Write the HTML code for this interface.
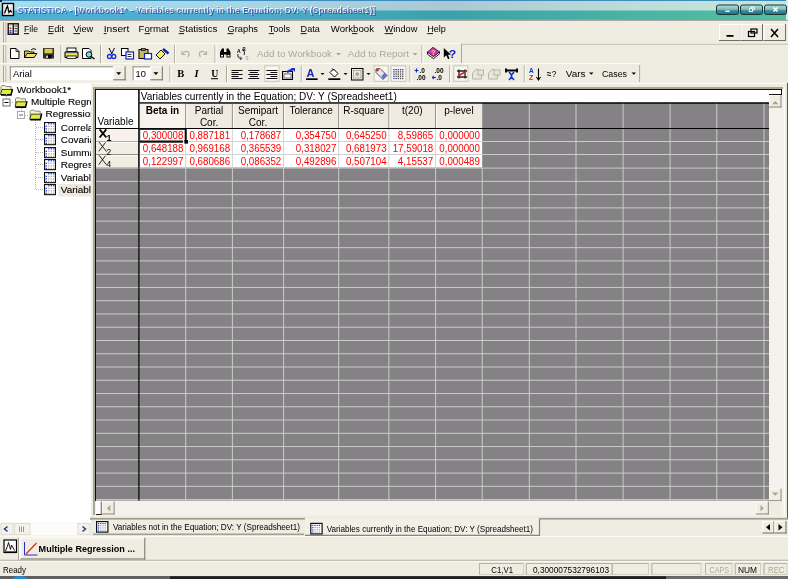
<!DOCTYPE html>
<html><head><meta charset="utf-8"><style>html,body{margin:0;padding:0;width:788px;height:579px;overflow:hidden;background:#efece2}</style></head>
<body><svg width="788" height="579" viewBox="0 0 788 579" font-family="'Liberation Sans', sans-serif" style="position:absolute;left:0;top:0;will-change:transform"><defs>
<linearGradient id="tbTop" x1="0" x2="1" y1="0" y2="0">
 <stop offset="0" stop-color="#a4dcee"/><stop offset="0.3" stop-color="#a6d6e6"/><stop offset="0.57" stop-color="#aac8d4"/><stop offset="0.8" stop-color="#bcdcd8"/><stop offset="1" stop-color="#c8e6d8"/>
</linearGradient>
<linearGradient id="tbBot" x1="0" x2="1" y1="0" y2="0">
 <stop offset="0" stop-color="#4ab2d6"/><stop offset="0.3" stop-color="#4eaccf"/><stop offset="0.57" stop-color="#3aa2aa"/><stop offset="0.8" stop-color="#48b4a4"/><stop offset="1" stop-color="#52c0a0"/>
</linearGradient>
<linearGradient id="tbBtn" x1="0" x2="0" y1="0" y2="1">
 <stop offset="0" stop-color="#b4dcdc"/><stop offset="0.45" stop-color="#80bcc0"/><stop offset="0.6" stop-color="#3a9098"/><stop offset="1" stop-color="#1a7078"/>
</linearGradient>
<clipPath id="treeclip"><rect x="0" y="84" width="91" height="438"/></clipPath>
<pattern id="dots" width="2" height="2" patternUnits="userSpaceOnUse"><rect width="1" height="1" fill="#a0a0a0"/></pattern>
</defs><rect x="0" y="0" width="788" height="579" fill="#efece2" /><rect x="0" y="0" width="788" height="20" fill="url(#tbBot)" /><rect x="0" y="1" width="788" height="9.5" fill="url(#tbTop)" /><rect x="0" y="0" width="788" height="1" fill="#3c8cbc" /><rect x="0" y="19" width="788" height="1" fill="#4ab0d8" /><rect x="786" y="0" width="2" height="20" fill="#d8ecf0" /><rect x="0" y="20" width="788" height="0.8" fill="#9a9890" /><rect x="0" y="0" width="2" height="2" fill="#202020" /><rect x="2.5" y="3.5" width="11" height="12" fill="#fff" stroke="#000" stroke-width="1.4"/><path d="M5 5 V14 M8 5 V14 M11 5 V14 M3.5 8 H13 M3.5 11 H13" stroke="#c8c8c8" stroke-width="0.6"/><path d="M4.5 13.5 L6.5 8 L7.5 6 L9 12.5 L10.5 10.5 L12 12.5" fill="none" stroke="#000" stroke-width="1.2"/><text x="17.3" y="13.3" font-size="8.2" font-weight="bold" fill="#ffffff" textLength="358" lengthAdjust="spacing">STATISTICA - [Workbook1* - Variables currently in the Equation; DV: Y (Spreadsheet1)]</text><text x="18.1" y="14.1" font-size="8.2" font-weight="bold" fill="#1a2896" fill-opacity="0.62" textLength="358" lengthAdjust="spacing">STATISTICA - [Workbook1* - Variables currently in the Equation; DV: Y (Spreadsheet1)]</text><rect x="716.5" y="5" width="22" height="9.5" rx="2" fill="url(#tbBtn)" stroke="#1c3438" stroke-width="1"/><rect x="725.5" y="10.5" width="4" height="1.5" fill="#fff" /><rect x="740.5" y="5" width="22" height="9.5" rx="2" fill="url(#tbBtn)" stroke="#1c3438" stroke-width="1"/><rect x="751.0" y="7" width="3.2" height="2.8" fill="none" stroke="#fff" stroke-width="0.9"/><rect x="749.3" y="8.8" width="3.2" height="2.8" fill="#3a9098" stroke="#fff" stroke-width="0.9"/><rect x="764.5" y="5" width="22" height="9.5" rx="2" fill="url(#tbBtn)" stroke="#1c3438" stroke-width="1"/><path d="M773.5 7.5 L777.5 11.5 M777.5 7.5 L773.5 11.5" stroke="#fff" stroke-width="1.6"/><line x1="3.5" y1="22" x2="3.5" y2="42.5" stroke="#a8a494" stroke-width="1" /><line x1="5.8" y1="22" x2="5.8" y2="42.5" stroke="#c0bcae" stroke-width="1" /><rect x="7.5" y="23" width="11.5" height="12" fill="#202020" /><rect x="9" y="24.5" width="3.5" height="9" fill="#fff" /><rect x="14" y="24.5" width="3.5" height="9" fill="#e8e8e8" /><rect x="9.5" y="25" width="2" height="1.6" fill="#e8e020" /><rect x="9.5" y="27.5" width="2" height="1.6" fill="#e02020" /><rect x="9.5" y="30" width="2" height="1.6" fill="#2030e0" /><rect x="9.5" y="32" width="2" height="1.2" fill="#2030e0" /><rect x="14.5" y="25.5" width="2.5" height="1" fill="#404040" /><rect x="14.5" y="28" width="2.5" height="1" fill="#404040" /><rect x="14.5" y="30.5" width="2.5" height="1" fill="#404040" /><rect x="14.5" y="33" width="2.5" height="1" fill="#404040" /><text x="24" y="31.8" font-size="9.6" fill="#000" font-weight="normal" text-anchor="start" textLength="14" lengthAdjust="spacingAndGlyphs" >File</text><text x="48" y="31.8" font-size="9.6" fill="#000" font-weight="normal" text-anchor="start" textLength="16" lengthAdjust="spacingAndGlyphs" >Edit</text><text x="73.4" y="31.8" font-size="9.6" fill="#000" font-weight="normal" text-anchor="start" textLength="19.8" lengthAdjust="spacingAndGlyphs" >View</text><text x="103.7" y="31.8" font-size="9.6" fill="#000" font-weight="normal" text-anchor="start" textLength="25.7" lengthAdjust="spacingAndGlyphs" >Insert</text><text x="138.6" y="31.8" font-size="9.6" fill="#000" font-weight="normal" text-anchor="start" textLength="30.4" lengthAdjust="spacingAndGlyphs" >Format</text><text x="178.8" y="31.8" font-size="9.6" fill="#000" font-weight="normal" text-anchor="start" textLength="38.6" lengthAdjust="spacingAndGlyphs" >Statistics</text><text x="227.5" y="31.8" font-size="9.6" fill="#000" font-weight="normal" text-anchor="start" textLength="30.5" lengthAdjust="spacingAndGlyphs" >Graphs</text><text x="268.7" y="31.8" font-size="9.6" fill="#000" font-weight="normal" text-anchor="start" textLength="21.3" lengthAdjust="spacingAndGlyphs" >Tools</text><text x="300.6" y="31.8" font-size="9.6" fill="#000" font-weight="normal" text-anchor="start" textLength="19.2" lengthAdjust="spacingAndGlyphs" >Data</text><text x="330.8" y="31.8" font-size="9.6" fill="#000" font-weight="normal" text-anchor="start" textLength="43.2" lengthAdjust="spacingAndGlyphs" >Workbook</text><text x="384.6" y="31.8" font-size="9.6" fill="#000" font-weight="normal" text-anchor="start" textLength="32.8" lengthAdjust="spacingAndGlyphs" >Window</text><text x="427.2" y="31.8" font-size="9.6" fill="#000" font-weight="normal" text-anchor="start" textLength="18.7" lengthAdjust="spacingAndGlyphs" >Help</text><rect x="24" y="33.2" width="5" height="0.9" fill="#000" /><rect x="48" y="33.2" width="5.5" height="0.9" fill="#000" /><rect x="73.4" y="33.2" width="6.599999999999994" height="0.9" fill="#000" /><rect x="103.7" y="33.2" width="2.799999999999997" height="0.9" fill="#000" /><rect x="144.5" y="33.2" width="5.5" height="0.9" fill="#000" /><rect x="178.8" y="33.2" width="5.199999999999989" height="0.9" fill="#000" /><rect x="227.5" y="33.2" width="6.0" height="0.9" fill="#000" /><rect x="268.7" y="33.2" width="5.300000000000011" height="0.9" fill="#000" /><rect x="300.6" y="33.2" width="5.899999999999977" height="0.9" fill="#000" /><rect x="352" y="33.2" width="5.5" height="0.9" fill="#000" /><rect x="384.6" y="33.2" width="8.399999999999977" height="0.9" fill="#000" /><rect x="427.2" y="33.2" width="5.800000000000011" height="0.9" fill="#000" /><rect x="0" y="43" width="461" height="1" fill="#fbfaf6" /><rect x="719" y="24" width="22.5" height="17" fill="#efece2" /><rect x="719" y="24" width="22.5" height="1" fill="#ffffff" /><rect x="719" y="24" width="1" height="17" fill="#ffffff" /><rect x="719" y="40" width="22.5" height="1" fill="#716f64" /><rect x="740.5" y="24" width="1" height="17" fill="#716f64" /><rect x="740.5" y="24" width="22.5" height="17" fill="#efece2" /><rect x="740.5" y="24" width="22.5" height="1" fill="#ffffff" /><rect x="740.5" y="24" width="1" height="17" fill="#ffffff" /><rect x="740.5" y="40" width="22.5" height="1" fill="#716f64" /><rect x="762.0" y="24" width="1" height="17" fill="#716f64" /><rect x="763.5" y="24" width="22.5" height="17" fill="#efece2" /><rect x="763.5" y="24" width="22.5" height="1" fill="#ffffff" /><rect x="763.5" y="24" width="1" height="17" fill="#ffffff" /><rect x="763.5" y="40" width="22.5" height="1" fill="#716f64" /><rect x="785.0" y="24" width="1" height="17" fill="#716f64" /><rect x="726.5" y="35" width="7" height="1.8" fill="#000" /><rect x="748.5" y="31.5" width="6" height="5" fill="none" stroke="#000" stroke-width="1.2"/><rect x="751" y="29" width="6" height="4" fill="none" stroke="#000" stroke-width="1.2"/><path d="M771 29 L778 37 M778 29 L771 37" stroke="#000" stroke-width="1.5"/><line x1="3.5" y1="45" x2="3.5" y2="63" stroke="#a8a494" stroke-width="1" /><line x1="5.8" y1="45" x2="5.8" y2="63" stroke="#c0bcae" stroke-width="1" /><g id="tb1"><path d="M10.5 48.5 H16 L19 51.5 V58.5 H10.5 Z" fill="#fff" stroke="#000" stroke-width="1"/><path d="M16 48.5 V51.5 H19" fill="none" stroke="#000" stroke-width="0.8"/><path d="M24.5 51 H29 L30 52 H34 V57.5 H24.5 Z" fill="#d8c848" stroke="#000" stroke-width="0.9"/><path d="M24.5 57.5 L27 53.5 H37 L34 57.5 Z" fill="#f0e070" stroke="#000" stroke-width="0.9"/><path d="M31 50 Q33 47.5 36 49.5" fill="none" stroke="#000" stroke-width="1"/><rect x="43" y="48" width="11" height="10.5" fill="#303030"/><rect x="44.5" y="48.8" width="8" height="4.5" fill="#d8d040"/><rect x="45.5" y="55" width="6" height="3.5" fill="#000"/><rect x="46" y="55.5" width="2" height="2.5" fill="#c8c8c8"/><line x1="61" y1="45" x2="61" y2="63" stroke="#aca899" stroke-width="1" /><line x1="62" y1="45" x2="62" y2="63" stroke="#ffffff" stroke-width="1" /><rect x="67" y="48" width="9" height="3.5" fill="#fff" stroke="#000" stroke-width="0.9"/><path d="M65 52 H78 V57.5 H65 Z" fill="#c0c0c0" stroke="#000" stroke-width="1"/><rect x="66" y="54" width="11" height="1" fill="#f0f040"/><rect x="67" y="56" width="9" height="2.5" fill="#fff" stroke="#000" stroke-width="0.8"/><path d="M82.5 48.5 H89 L91 50.5 V58.5 H82.5 Z" fill="#fff" stroke="#000" stroke-width="1"/><circle cx="89" cy="54.5" r="2.8" fill="#80d8f0" stroke="#000" stroke-width="1"/><path d="M91 56.5 L94.5 59" stroke="#000" stroke-width="1.5"/><line x1="100.5" y1="45" x2="100.5" y2="63" stroke="#aca899" stroke-width="1" /><line x1="101.5" y1="45" x2="101.5" y2="63" stroke="#ffffff" stroke-width="1" /><path d="M109 48 L112 54 M114.5 48 L111.5 54" stroke="#000" stroke-width="1"/><circle cx="109.5" cy="56.5" r="2" fill="none" stroke="#1830d0" stroke-width="1.3"/><circle cx="113.8" cy="56.5" r="2" fill="none" stroke="#1830d0" stroke-width="1.3"/><rect x="121.5" y="48.5" width="6.5" height="7" fill="#fff" stroke="#000" stroke-width="1"/><rect x="126" y="52" width="7.5" height="7" fill="#fff" stroke="#1020c0" stroke-width="1.2"/><rect x="127.5" y="54" width="4" height="0.8" fill="#000"/><rect x="127.5" y="56" width="4" height="0.8" fill="#000"/><rect x="139" y="49.5" width="9" height="9" fill="#c8b860" stroke="#000" stroke-width="1"/><rect x="141.5" y="48.5" width="4" height="2" fill="#808080" stroke="#000" stroke-width="0.7"/><rect x="144.5" y="53.5" width="7" height="5.5" fill="#fff" stroke="#1020c0" stroke-width="1.2"/><path d="M163 49 L168.5 53.5" stroke="#1020a0" stroke-width="2.5"/><path d="M156 55 L161 50 L165 54 L160 59 Z" fill="#f0e878" stroke="#000" stroke-width="0.9"/><line x1="174.6" y1="45" x2="174.6" y2="63" stroke="#aca899" stroke-width="1" /><line x1="175.6" y1="45" x2="175.6" y2="63" stroke="#ffffff" stroke-width="1" /><path d="M182 51 V54.5 H185.5 M182.5 54 Q185 50 188.5 52 Q190 54.5 188 57" fill="none" stroke="#b4b0a0" stroke-width="1.1"/><path d="M206.5 51 V54.5 H203 M206 54 Q203.5 50 200 52 Q198.5 54.5 200.5 57" fill="none" stroke="#b4b0a0" stroke-width="1.1"/><line x1="215" y1="45" x2="215" y2="63" stroke="#aca899" stroke-width="1" /><line x1="216" y1="45" x2="216" y2="63" stroke="#ffffff" stroke-width="1" /><path d="M220 52 L222 48.5 H224 V52 H226.5 V48.5 H228.5 L230.5 52 V57.5 H226.5 V54.5 H224 V57.5 H220 Z" fill="#000"/><rect x="221" y="55" width="2" height="1.5" fill="#fff"/><rect x="227.5" y="55" width="2" height="1.5" fill="#fff"/><text x="237" y="53" font-size="5" font-weight="bold">A</text><text x="242.5" y="50.5" font-size="4.5" font-weight="bold">B</text><path d="M238 54 Q237 58 241 58.5 M242 49.5 Q245.5 51 244 55" fill="none" stroke="#000" stroke-width="0.9"/><path d="M240 56.5 L242 58.5 L240 60" fill="none" stroke="#1030d0" stroke-width="0.9"/><text x="245.5" y="59.5" font-size="4.5" fill="#909090">S</text><text x="257" y="57.3" font-size="9.7" fill="#aca899" font-weight="normal" text-anchor="start" textLength="75" lengthAdjust="spacingAndGlyphs" >Add to Workbook</text><path d="M336 53 H341 L338.5 55.5 Z" fill="#aca899"/><text x="347.8" y="57.3" font-size="9.7" fill="#aca899" font-weight="normal" text-anchor="start" textLength="61.2" lengthAdjust="spacingAndGlyphs" >Add to Report</text><path d="M412.5 53 H417.5 L415 55.5 Z" fill="#aca899"/><line x1="422" y1="45" x2="422" y2="63" stroke="#aca899" stroke-width="1" /><line x1="423" y1="45" x2="423" y2="63" stroke="#ffffff" stroke-width="1" /><path d="M427.5 54.2 L433.5 58.7 L439.5 53.8 V51.8 L433.5 56.5 L427.5 52 Z" fill="#fff" stroke="#000" stroke-width="0.9"/><path d="M427.5 52 L433 47.3 L439.5 51.8 L433.5 56.5 Z" fill="#e028e0" stroke="#202020" stroke-width="0.8"/><text x="431.3" y="54.8" font-size="6.5" font-weight="bold" fill="#f0f000">?</text><path d="M443.8 48 V57.5 L446.3 55.3 L448 59.2 L449.6 58.5 L448 54.8 H451 Z" fill="#000"/><text x="448.8" y="57.8" font-size="11.5" font-weight="bold" fill="#1020d0" textLength="7.5" lengthAdjust="spacingAndGlyphs">?</text></g><line x1="461.5" y1="43.5" x2="461.5" y2="63.5" stroke="#aca899" stroke-width="1" /><rect x="462" y="43.8" width="326" height="1" fill="#c4c0b0" /><rect x="0" y="63" width="640" height="1" fill="#fdfcf8" /><line x1="3.5" y1="65.5" x2="3.5" y2="82" stroke="#a8a494" stroke-width="1" /><line x1="5.8" y1="65.5" x2="5.8" y2="82" stroke="#c0bcae" stroke-width="1" /><rect x="9.8" y="66.3" width="115.8" height="14.0" fill="#ffffff" /><rect x="9.8" y="66.3" width="115.8" height="1" fill="#8c8a7c" /><rect x="9.8" y="66.3" width="1" height="14.0" fill="#8c8a7c" /><rect x="113.19999999999999" y="66.3" width="12.4" height="14.0" fill="#efece2" /><rect x="113.19999999999999" y="66.3" width="1" height="14.0" fill="#ffffff" /><rect x="113.19999999999999" y="66.3" width="12.4" height="1" fill="#ffffff" /><rect x="113.19999999999999" y="79.3" width="12.4" height="1" fill="#716f64" /><rect x="124.6" y="66.3" width="1" height="14.0" fill="#716f64" /><path d="M116.19999999999999 72.3 H121.19999999999999 L118.69999999999999 75.1 Z" fill="#000"/><text x="12.9" y="76.7" font-size="9.8" fill="#000" font-weight="normal" text-anchor="start" textLength="19" lengthAdjust="spacingAndGlyphs" >Arial</text><rect x="132.6" y="66.3" width="30.200000000000017" height="14.0" fill="#ffffff" /><rect x="132.6" y="66.3" width="30.200000000000017" height="1" fill="#8c8a7c" /><rect x="132.6" y="66.3" width="1" height="14.0" fill="#8c8a7c" /><rect x="150.4" y="66.3" width="12.4" height="14.0" fill="#efece2" /><rect x="150.4" y="66.3" width="1" height="14.0" fill="#ffffff" /><rect x="150.4" y="66.3" width="12.4" height="1" fill="#ffffff" /><rect x="150.4" y="79.3" width="12.4" height="1" fill="#716f64" /><rect x="161.8" y="66.3" width="1" height="14.0" fill="#716f64" /><path d="M153.4 72.3 H158.4 L155.9 75.1 Z" fill="#000"/><text x="135.5" y="76.7" font-size="9.8" fill="#000" font-weight="normal" text-anchor="start" textLength="10.3" lengthAdjust="spacingAndGlyphs" >10</text><line x1="170" y1="65.5" x2="170" y2="82" stroke="#aca899" stroke-width="1" /><line x1="171" y1="65.5" x2="171" y2="82" stroke="#ffffff" stroke-width="1" /><text x="177.3" y="77.4" font-size="10.5" fill="#000" font-weight="bold" text-anchor="start" font-family="Liberation Serif">B</text><text x="194.6" y="77.4" font-size="10.5" fill="#000" font-weight="bold" text-anchor="start" font-family="Liberation Serif" font-style="italic">I</text><text x="211.2" y="76.6" font-size="9.8" fill="#000" font-weight="bold" text-anchor="start" font-family="Liberation Serif">U</text><rect x="211" y="78.2" width="7" height="1" fill="#000" /><line x1="226.5" y1="65.5" x2="226.5" y2="82" stroke="#aca899" stroke-width="1" /><line x1="227.5" y1="65.5" x2="227.5" y2="82" stroke="#ffffff" stroke-width="1" /><rect x="231.5" y="70" width="11" height="1" fill="#101010" /><rect x="231.5" y="72" width="7" height="1" fill="#101010" /><rect x="231.5" y="74" width="11" height="1" fill="#101010" /><rect x="231.5" y="76" width="7" height="1" fill="#101010" /><rect x="231.5" y="78" width="11" height="1" fill="#101010" /><rect x="248.3" y="70" width="11" height="1" fill="#101010" /><rect x="249.8" y="72" width="8" height="1" fill="#101010" /><rect x="248.3" y="74" width="11" height="1" fill="#101010" /><rect x="249.8" y="76" width="8" height="1" fill="#101010" /><rect x="248.3" y="78" width="11" height="1" fill="#101010" /><rect x="264.3" y="65.3" width="15.3" height="16.5" fill="#f8f7f2" /><rect x="264.8" y="65.8" width="14.3" height="15.5" fill="none" stroke="#c8c4b4" stroke-width="1"/><rect x="266.4" y="70" width="11" height="1" fill="#101010" /><rect x="270.4" y="72" width="7" height="1" fill="#101010" /><rect x="266.4" y="74" width="11" height="1" fill="#101010" /><rect x="270.4" y="76" width="7" height="1" fill="#101010" /><rect x="266.4" y="78" width="11" height="1" fill="#101010" /><rect x="282.5" y="71.5" width="10" height="8" fill="#e0e0e0" stroke="#000" stroke-width="1"/><rect x="284" y="74" width="7" height="4" fill="#fff" stroke="#404040" stroke-width="0.7"/><path d="M287 72 L293 69" stroke="#1030d0" stroke-width="2"/><path d="M291 68 H295 V72 Z" fill="#1030d0"/><line x1="301.3" y1="65.5" x2="301.3" y2="82" stroke="#aca899" stroke-width="1" /><line x1="302.3" y1="65.5" x2="302.3" y2="82" stroke="#ffffff" stroke-width="1" /><text x="306.5" y="77" font-size="11" fill="#1028c0" font-weight="bold" text-anchor="start" >A</text><rect x="306" y="78.3" width="11.6" height="1.7" fill="#000" /><path d="M320.5 73 H324.5 L322.5 75 Z" fill="#000"/><path d="M330 72.5 L333.5 69 L338 73.5 L334.5 77 Z" fill="#fff" stroke="#000" stroke-width="1"/><path d="M332 68.5 L334 70.5" stroke="#000" stroke-width="1"/><rect x="328.3" y="78.3" width="12" height="1.7" fill="#000" /><path d="M343.5 73 H347.5 L345.5 75 Z" fill="#000"/><rect x="351.5" y="68.5" width="11.5" height="11.5" fill="none" stroke="#000" stroke-width="1"/><rect x="353.5" y="70.5" width="7.5" height="7.5" fill="none" stroke="#909090" stroke-width="0.7"/><circle cx="357.2" cy="74.2" r="1.3" fill="none" stroke="#404040" stroke-width="0.7"/><path d="M366.5 73 H370.5 L368.5 75 Z" fill="#000"/><rect x="373.6" y="65.3" width="15.1" height="16.5" fill="#f8f7f2" /><rect x="374.1" y="65.8" width="14.1" height="15.5" fill="none" stroke="#c8c4b4" stroke-width="1"/><path d="M376 69 L380 68.5 L387 75.5 L383 79.5 L376 72.5 Z" fill="#e8e8f0" stroke="#404040" stroke-width="0.9"/><path d="M381.5 76 L385 72.5 L387 75.5 L383 79.5 Z" fill="#6070e0"/><circle cx="377.5" cy="70" r="1.4" fill="#e02020"/><rect x="390.5" y="65.3" width="15.9" height="16.5" fill="#f8f7f2" /><rect x="391" y="65.8" width="14.9" height="15.5" fill="none" stroke="#c8c4b4" stroke-width="1"/><rect x="393.3" y="69.0" width="1.3" height="1.3" fill="#2030c0" /><rect x="395.5" y="69.0" width="1.3" height="1.3" fill="#2030c0" /><rect x="397.7" y="69.0" width="1.3" height="1.3" fill="#2030c0" /><rect x="399.90000000000003" y="69.0" width="1.3" height="1.3" fill="#2030c0" /><rect x="402.1" y="69.0" width="1.3" height="1.3" fill="#2030c0" /><rect x="393.3" y="71.2" width="1.3" height="1.3" fill="#2030c0" /><rect x="395.5" y="71.2" width="1.3" height="1.3" fill="#404040" /><rect x="397.7" y="71.2" width="1.3" height="1.3" fill="#404040" /><rect x="399.90000000000003" y="71.2" width="1.3" height="1.3" fill="#404040" /><rect x="402.1" y="71.2" width="1.3" height="1.3" fill="#404040" /><rect x="393.3" y="73.4" width="1.3" height="1.3" fill="#2030c0" /><rect x="395.5" y="73.4" width="1.3" height="1.3" fill="#404040" /><rect x="397.7" y="73.4" width="1.3" height="1.3" fill="#404040" /><rect x="399.90000000000003" y="73.4" width="1.3" height="1.3" fill="#404040" /><rect x="402.1" y="73.4" width="1.3" height="1.3" fill="#404040" /><rect x="393.3" y="75.6" width="1.3" height="1.3" fill="#2030c0" /><rect x="395.5" y="75.6" width="1.3" height="1.3" fill="#404040" /><rect x="397.7" y="75.6" width="1.3" height="1.3" fill="#404040" /><rect x="399.90000000000003" y="75.6" width="1.3" height="1.3" fill="#404040" /><rect x="402.1" y="75.6" width="1.3" height="1.3" fill="#404040" /><rect x="393.3" y="77.8" width="1.3" height="1.3" fill="#2030c0" /><rect x="395.5" y="77.8" width="1.3" height="1.3" fill="#404040" /><rect x="397.7" y="77.8" width="1.3" height="1.3" fill="#404040" /><rect x="399.90000000000003" y="77.8" width="1.3" height="1.3" fill="#404040" /><rect x="402.1" y="77.8" width="1.3" height="1.3" fill="#404040" /><line x1="410" y1="65.5" x2="410" y2="82" stroke="#aca899" stroke-width="1" /><line x1="411" y1="65.5" x2="411" y2="82" stroke="#ffffff" stroke-width="1" /><path d="M416.5 68.5 V72.5 M414.5 70.5 H418.5" stroke="#1030d0" stroke-width="1.2"/><text x="419.5" y="73.3" font-size="6.5" fill="#000" font-weight="bold" text-anchor="start" >.0</text><text x="416.5" y="79.5" font-size="6.5" fill="#000" font-weight="bold" text-anchor="start" >.00</text><text x="434.5" y="73.3" font-size="6.5" fill="#000" font-weight="bold" text-anchor="start" >.00</text><path d="M432 77.5 H436" stroke="#1030d0" stroke-width="1.2"/><path d="M432 77.5 L434 75.8 M432 77.5 L434 79.2" stroke="#1030d0" stroke-width="1"/><text x="436.5" y="79.5" font-size="6.5" fill="#000" font-weight="bold" text-anchor="start" >.0</text><line x1="449.7" y1="65.5" x2="449.7" y2="82" stroke="#aca899" stroke-width="1" /><line x1="450.7" y1="65.5" x2="450.7" y2="82" stroke="#ffffff" stroke-width="1" /><rect x="453.3" y="65.3" width="15.1" height="16.5" fill="#f8f7f2" /><rect x="453.8" y="65.8" width="14.1" height="15.5" fill="none" stroke="#c8c4b4" stroke-width="1"/><path d="M457 71 H467 M457 77 H467 M459 69.5 V78.5 M465 69.5 V78.5" stroke="#202020" stroke-width="1.3"/><path d="M458 76 L466 71.5" stroke="#e02020" stroke-width="1.5"/><path d="M472.5 73 L477 69 L481.5 73 V79 H472.5 Z" fill="#e8e6dc" stroke="#b8b4a4" stroke-width="1"/><rect x="478" y="70" width="5.5" height="5" fill="#e8e6dc" stroke="#b8b4a4" stroke-width="1"/><path d="M488.5 73 L493 69 L497.5 73 V79 H488.5 Z" fill="#e8e6dc" stroke="#b8b4a4" stroke-width="1"/><rect x="494" y="70" width="6" height="5" fill="#e8e6dc" stroke="#b8b4a4" stroke-width="1"/><path d="M505 70.5 H518" stroke="#000" stroke-width="2"/><rect x="505" y="68.5" width="2" height="4" fill="#000"/><rect x="516" y="68.5" width="2" height="4" fill="#000"/><path d="M509 72 L511.5 75 L514 72 M511.5 75 V77 L509 80 M511.5 77 L514 80" fill="none" stroke="#1030d0" stroke-width="1.6"/><line x1="524.3" y1="65.5" x2="524.3" y2="82" stroke="#aca899" stroke-width="1" /><line x1="525.3" y1="65.5" x2="525.3" y2="82" stroke="#ffffff" stroke-width="1" /><text x="529" y="73.3" font-size="6.5" fill="#1030d0" font-weight="bold" text-anchor="start" >A</text><text x="529" y="80" font-size="7" fill="#e02020" font-weight="bold" text-anchor="start" >Z</text><path d="M538.5 68.5 V79.5 M536.5 77 L538.5 80 L540.5 77" fill="none" stroke="#000" stroke-width="1.1"/><path d="M547 72.8 Q548 71.8 549 72.8 T551 72.8 M547 75.3 Q548 74.3 549 75.3 T551 75.3" fill="none" stroke="#000" stroke-width="0.9"/><text x="551.8" y="76.8" font-size="8.5" fill="#000" font-weight="normal" text-anchor="start" textLength="4.6" lengthAdjust="spacingAndGlyphs" >?</text><text x="565.8" y="76.8" font-size="9.7" fill="#000" font-weight="normal" text-anchor="start" textLength="19.7" lengthAdjust="spacingAndGlyphs" >Vars</text><path d="M589 72.5 H593.5 L591.25 74.8 Z" fill="#000"/><text x="602" y="76.8" font-size="9.7" fill="#000" font-weight="normal" text-anchor="start" textLength="25" lengthAdjust="spacingAndGlyphs" >Cases</text><path d="M631.5 72.5 H636 L633.75 74.8 Z" fill="#000"/><line x1="639.6" y1="65" x2="639.6" y2="82" stroke="#aca899" stroke-width="1" /><rect x="0" y="82.8" width="788" height="1" fill="#fdfcf8" /><rect x="0" y="83.5" width="91" height="439" fill="#ffffff" /><g clip-path="url(#treeclip)"><path d="M1 86.5 L2 85.5 H5 L6 86.5 H11 V94.5 H1 Z" fill="#f4f4c0" stroke="#707060" stroke-width="0.8"/><path d="M0.5 94.5 L2 89.5 H12.5 L11 94.5 Z" fill="#e0ec40" stroke="#202020" stroke-width="0.8"/><path d="M12.5 89 L11 95 H1" fill="none" stroke="#000" stroke-width="1.4"/><text x="16.8" y="92.6" font-size="8.5" fill="#000" font-weight="normal" text-anchor="start" textLength="54.4" lengthAdjust="spacingAndGlyphs" stroke="#000" stroke-width="0.1">Workbook1*</text><path d="M6.5 94 V99 M10 102.5 H14 M21.5 106 V111 M25 115.5 H29 M35.5 120 V190" stroke="#b4b4b4" stroke-width="1" stroke-dasharray="1 1"/><path d="M36 127.5 H43.5" stroke="#b4b4b4" stroke-width="1" stroke-dasharray="1 1"/><path d="M36 139.5 H43.5" stroke="#b4b4b4" stroke-width="1" stroke-dasharray="1 1"/><path d="M36 152.5 H43.5" stroke="#b4b4b4" stroke-width="1" stroke-dasharray="1 1"/><path d="M36 164.5 H43.5" stroke="#b4b4b4" stroke-width="1" stroke-dasharray="1 1"/><path d="M36 177.5 H43.5" stroke="#b4b4b4" stroke-width="1" stroke-dasharray="1 1"/><path d="M36 189.5 H43.5" stroke="#b4b4b4" stroke-width="1" stroke-dasharray="1 1"/><rect x="3" y="99" width="7" height="7" fill="#fff" stroke="#606060" stroke-width="0.9"/><path d="M4.5 102.5 H8.5" stroke="#000" stroke-width="1"/><rect x="17.5" y="111.5" width="7" height="7" fill="#fff" stroke="#a0a0a0" stroke-width="0.9"/><path d="M19 115 H23" stroke="#606060" stroke-width="1"/><path d="M15.5 98.8 L16.5 97.8 H19.5 L20.5 98.8 H25.5 V106.8 H15.5 Z" fill="#f4f4c0" stroke="#707060" stroke-width="0.8"/><path d="M15.0 106.8 L16.5 101.8 H27.0 L25.5 106.8 Z" fill="#e0ec40" stroke="#202020" stroke-width="0.8"/><path d="M27.0 101.3 L25.5 107.3 H15.5" fill="none" stroke="#000" stroke-width="1.4"/><text x="30.9" y="105" font-size="8.5" fill="#000" font-weight="normal" text-anchor="start" textLength="119.4" lengthAdjust="spacingAndGlyphs" stroke="#000" stroke-width="0.1">Multiple Regression results</text><path d="M30.2 111.2 L31.2 110.2 H34.2 L35.2 111.2 H40.2 V119.2 H30.2 Z" fill="#f4f4c0" stroke="#707060" stroke-width="0.8"/><path d="M29.7 119.2 L31.2 114.2 H41.7 L40.2 119.2 Z" fill="#e0ec40" stroke="#202020" stroke-width="0.8"/><path d="M41.7 113.7 L40.2 119.7 H30.2" fill="none" stroke="#000" stroke-width="1.4"/><text x="45.5" y="117" font-size="8.5" fill="#000" font-weight="normal" text-anchor="start" textLength="82.4" lengthAdjust="spacingAndGlyphs" stroke="#000" stroke-width="0.1">Regression results</text><rect x="58.4" y="184" width="33" height="12.5" fill="#ede9dc" /><rect x="44" y="122" width="12" height="11.2" fill="#101010" /><rect x="45.1" y="123.1" width="9.8" height="9" fill="#ffffff" /><rect x="48.1" y="123.1" width="1.3" height="1.3" fill="#1830e0" /><rect x="50.6" y="123.1" width="1.3" height="1.3" fill="#1830e0" /><rect x="53.1" y="123.1" width="1.3" height="1.3" fill="#1830e0" /><rect x="45.6" y="125.69999999999999" width="1.3" height="1.3" fill="#1830e0" /><rect x="48.1" y="125.69999999999999" width="1.3" height="1.3" fill="#a8a8a8" /><rect x="50.6" y="125.69999999999999" width="1.3" height="1.3" fill="#a8a8a8" /><rect x="53.1" y="125.69999999999999" width="1.3" height="1.3" fill="#a8a8a8" /><rect x="45.6" y="128.2" width="1.3" height="1.3" fill="#1830e0" /><rect x="48.1" y="128.2" width="1.3" height="1.3" fill="#a8a8a8" /><rect x="50.6" y="128.2" width="1.3" height="1.3" fill="#a8a8a8" /><rect x="53.1" y="128.2" width="1.3" height="1.3" fill="#a8a8a8" /><rect x="45.6" y="130.7" width="1.3" height="1.3" fill="#1830e0" /><rect x="48.1" y="130.7" width="1.3" height="1.3" fill="#a8a8a8" /><rect x="50.6" y="130.7" width="1.3" height="1.3" fill="#a8a8a8" /><rect x="53.1" y="130.7" width="1.3" height="1.3" fill="#a8a8a8" /><text x="60.8" y="130.6" font-size="8.5" fill="#000" font-weight="normal" text-anchor="start" textLength="53.6" lengthAdjust="spacingAndGlyphs" stroke="#000" stroke-width="0.1">Correlations</text><rect x="44" y="134" width="12" height="11.2" fill="#101010" /><rect x="45.1" y="135.1" width="9.8" height="9" fill="#ffffff" /><rect x="48.1" y="135.1" width="1.3" height="1.3" fill="#1830e0" /><rect x="50.6" y="135.1" width="1.3" height="1.3" fill="#1830e0" /><rect x="53.1" y="135.1" width="1.3" height="1.3" fill="#1830e0" /><rect x="45.6" y="137.7" width="1.3" height="1.3" fill="#1830e0" /><rect x="48.1" y="137.7" width="1.3" height="1.3" fill="#a8a8a8" /><rect x="50.6" y="137.7" width="1.3" height="1.3" fill="#a8a8a8" /><rect x="53.1" y="137.7" width="1.3" height="1.3" fill="#a8a8a8" /><rect x="45.6" y="140.2" width="1.3" height="1.3" fill="#1830e0" /><rect x="48.1" y="140.2" width="1.3" height="1.3" fill="#a8a8a8" /><rect x="50.6" y="140.2" width="1.3" height="1.3" fill="#a8a8a8" /><rect x="53.1" y="140.2" width="1.3" height="1.3" fill="#a8a8a8" /><rect x="45.6" y="142.7" width="1.3" height="1.3" fill="#1830e0" /><rect x="48.1" y="142.7" width="1.3" height="1.3" fill="#a8a8a8" /><rect x="50.6" y="142.7" width="1.3" height="1.3" fill="#a8a8a8" /><rect x="53.1" y="142.7" width="1.3" height="1.3" fill="#a8a8a8" /><text x="60.8" y="142.6" font-size="8.5" fill="#000" font-weight="normal" text-anchor="start" textLength="55.3" lengthAdjust="spacingAndGlyphs" stroke="#000" stroke-width="0.1">Covariances</text><rect x="44" y="147" width="12" height="11.2" fill="#101010" /><rect x="45.1" y="148.1" width="9.8" height="9" fill="#ffffff" /><rect x="48.1" y="148.1" width="1.3" height="1.3" fill="#1830e0" /><rect x="50.6" y="148.1" width="1.3" height="1.3" fill="#1830e0" /><rect x="53.1" y="148.1" width="1.3" height="1.3" fill="#1830e0" /><rect x="45.6" y="150.7" width="1.3" height="1.3" fill="#1830e0" /><rect x="48.1" y="150.7" width="1.3" height="1.3" fill="#a8a8a8" /><rect x="50.6" y="150.7" width="1.3" height="1.3" fill="#a8a8a8" /><rect x="53.1" y="150.7" width="1.3" height="1.3" fill="#a8a8a8" /><rect x="45.6" y="153.2" width="1.3" height="1.3" fill="#1830e0" /><rect x="48.1" y="153.2" width="1.3" height="1.3" fill="#a8a8a8" /><rect x="50.6" y="153.2" width="1.3" height="1.3" fill="#a8a8a8" /><rect x="53.1" y="153.2" width="1.3" height="1.3" fill="#a8a8a8" /><rect x="45.6" y="155.7" width="1.3" height="1.3" fill="#1830e0" /><rect x="48.1" y="155.7" width="1.3" height="1.3" fill="#a8a8a8" /><rect x="50.6" y="155.7" width="1.3" height="1.3" fill="#a8a8a8" /><rect x="53.1" y="155.7" width="1.3" height="1.3" fill="#a8a8a8" /><text x="60.8" y="155.6" font-size="8.5" fill="#000" font-weight="normal" text-anchor="start" textLength="42.6" lengthAdjust="spacingAndGlyphs" stroke="#000" stroke-width="0.1">Summary</text><rect x="44" y="159" width="12" height="11.2" fill="#101010" /><rect x="45.1" y="160.1" width="9.8" height="9" fill="#ffffff" /><rect x="48.1" y="160.1" width="1.3" height="1.3" fill="#1830e0" /><rect x="50.6" y="160.1" width="1.3" height="1.3" fill="#1830e0" /><rect x="53.1" y="160.1" width="1.3" height="1.3" fill="#1830e0" /><rect x="45.6" y="162.7" width="1.3" height="1.3" fill="#1830e0" /><rect x="48.1" y="162.7" width="1.3" height="1.3" fill="#a8a8a8" /><rect x="50.6" y="162.7" width="1.3" height="1.3" fill="#a8a8a8" /><rect x="53.1" y="162.7" width="1.3" height="1.3" fill="#a8a8a8" /><rect x="45.6" y="165.2" width="1.3" height="1.3" fill="#1830e0" /><rect x="48.1" y="165.2" width="1.3" height="1.3" fill="#a8a8a8" /><rect x="50.6" y="165.2" width="1.3" height="1.3" fill="#a8a8a8" /><rect x="53.1" y="165.2" width="1.3" height="1.3" fill="#a8a8a8" /><rect x="45.6" y="167.7" width="1.3" height="1.3" fill="#1830e0" /><rect x="48.1" y="167.7" width="1.3" height="1.3" fill="#a8a8a8" /><rect x="50.6" y="167.7" width="1.3" height="1.3" fill="#a8a8a8" /><rect x="53.1" y="167.7" width="1.3" height="1.3" fill="#a8a8a8" /><text x="60.8" y="167.6" font-size="8.5" fill="#000" font-weight="normal" text-anchor="start" textLength="94.0" lengthAdjust="spacingAndGlyphs" stroke="#000" stroke-width="0.1">Regression summary</text><rect x="44" y="172" width="12" height="11.2" fill="#101010" /><rect x="45.1" y="173.1" width="9.8" height="9" fill="#ffffff" /><rect x="48.1" y="173.1" width="1.3" height="1.3" fill="#1830e0" /><rect x="50.6" y="173.1" width="1.3" height="1.3" fill="#1830e0" /><rect x="53.1" y="173.1" width="1.3" height="1.3" fill="#1830e0" /><rect x="45.6" y="175.7" width="1.3" height="1.3" fill="#1830e0" /><rect x="48.1" y="175.7" width="1.3" height="1.3" fill="#a8a8a8" /><rect x="50.6" y="175.7" width="1.3" height="1.3" fill="#a8a8a8" /><rect x="53.1" y="175.7" width="1.3" height="1.3" fill="#a8a8a8" /><rect x="45.6" y="178.2" width="1.3" height="1.3" fill="#1830e0" /><rect x="48.1" y="178.2" width="1.3" height="1.3" fill="#a8a8a8" /><rect x="50.6" y="178.2" width="1.3" height="1.3" fill="#a8a8a8" /><rect x="53.1" y="178.2" width="1.3" height="1.3" fill="#a8a8a8" /><rect x="45.6" y="180.7" width="1.3" height="1.3" fill="#1830e0" /><rect x="48.1" y="180.7" width="1.3" height="1.3" fill="#a8a8a8" /><rect x="50.6" y="180.7" width="1.3" height="1.3" fill="#a8a8a8" /><rect x="53.1" y="180.7" width="1.3" height="1.3" fill="#a8a8a8" /><text x="60.8" y="180.6" font-size="8.5" fill="#000" font-weight="normal" text-anchor="start" textLength="57.3" lengthAdjust="spacingAndGlyphs" stroke="#000" stroke-width="0.1">Variables not</text><rect x="44" y="184" width="12" height="11.2" fill="#101010" /><rect x="45.1" y="185.1" width="9.8" height="9" fill="#ffffff" /><rect x="48.1" y="185.1" width="1.3" height="1.3" fill="#1830e0" /><rect x="50.6" y="185.1" width="1.3" height="1.3" fill="#1830e0" /><rect x="53.1" y="185.1" width="1.3" height="1.3" fill="#1830e0" /><rect x="45.6" y="187.7" width="1.3" height="1.3" fill="#1830e0" /><rect x="48.1" y="187.7" width="1.3" height="1.3" fill="#a8a8a8" /><rect x="50.6" y="187.7" width="1.3" height="1.3" fill="#a8a8a8" /><rect x="53.1" y="187.7" width="1.3" height="1.3" fill="#a8a8a8" /><rect x="45.6" y="190.2" width="1.3" height="1.3" fill="#1830e0" /><rect x="48.1" y="190.2" width="1.3" height="1.3" fill="#a8a8a8" /><rect x="50.6" y="190.2" width="1.3" height="1.3" fill="#a8a8a8" /><rect x="53.1" y="190.2" width="1.3" height="1.3" fill="#a8a8a8" /><rect x="45.6" y="192.7" width="1.3" height="1.3" fill="#1830e0" /><rect x="48.1" y="192.7" width="1.3" height="1.3" fill="#a8a8a8" /><rect x="50.6" y="192.7" width="1.3" height="1.3" fill="#a8a8a8" /><rect x="53.1" y="192.7" width="1.3" height="1.3" fill="#a8a8a8" /><text x="60.8" y="192.6" font-size="8.5" fill="#000" font-weight="normal" text-anchor="start" textLength="81.6" lengthAdjust="spacingAndGlyphs" stroke="#000" stroke-width="0.1">Variables currently</text></g><rect x="91" y="83.5" width="2" height="440" fill="#efece2" /><rect x="0" y="522.5" width="91" height="13" fill="#fcfcfa" /><rect x="0.5" y="523" width="13" height="12" fill="#f4f2ea" /><rect x="1.0" y="523.5" width="12" height="11" fill="none" stroke="#e0ddd0" stroke-width="1"/><rect x="77.5" y="523" width="13" height="12" fill="#f4f2ea" /><rect x="78.0" y="523.5" width="12" height="11" fill="none" stroke="#e0ddd0" stroke-width="1"/><rect x="14" y="523" width="16.5" height="12" fill="#f4f2ea" /><rect x="14.5" y="523.5" width="15.5" height="11" fill="none" stroke="#e0ddd0" stroke-width="1"/><path d="M19.5 526.5 V532 M21.5 526.5 V532 M23.5 526.5 V532" stroke="#8c8c8c" stroke-width="0.9"/><path d="M7.5 526.5 L4.5 529 L7.5 531.5" fill="none" stroke="#1c3c8c" stroke-width="1.5"/><path d="M82.5 526.5 L85.5 529 L82.5 531.5" fill="none" stroke="#1c3c8c" stroke-width="1.5"/><rect x="93" y="87" width="694" height="433" fill="#f6f3ec" /><rect x="93" y="87" width="690" height="2" fill="#a8a594" /><rect x="93" y="87" width="2" height="430.5" fill="#a8a594" /><rect x="95" y="89" width="686.7" height="1" fill="#101010" /><rect x="95" y="89" width="1" height="412" fill="#101010" /><rect x="787" y="83" width="1" height="437" fill="#5c5656" /><rect x="784.3" y="89" width="1" height="429" fill="#ffffff" /><rect x="785.3" y="83" width="1.7" height="437" fill="#ebe8da" /><rect x="93" y="515" width="694" height="2.6" fill="#f2efe6" /><rect x="90" y="517.8" width="698" height="2" fill="#a4a090" /><rect x="96" y="90" width="673" height="410.8" fill="#848284" /><rect x="96" y="90" width="42.5" height="38.5" fill="#ffffff" /><rect x="139" y="90" width="630" height="13" fill="#ffffff" /><text x="140.8" y="99.8" font-size="10" fill="#000" font-weight="normal" text-anchor="start" textLength="256" lengthAdjust="spacingAndGlyphs" >Variables currently in the Equation; DV: Y (Spreadsheet1)</text><line x1="139" y1="103" x2="769" y2="103" stroke="#000" stroke-width="1" /><line x1="139" y1="90" x2="139" y2="103" stroke="#909090" stroke-width="1" /><rect x="139" y="103.5" width="343.2" height="25" fill="#eeeae0" /><rect x="139.5" y="103.5" width="46" height="25" fill="#f8f2ec" /><text x="162.35" y="113.8" font-size="10" fill="#000" font-weight="bold" text-anchor="middle" >Beta in</text><text x="209.05" y="113.8" font-size="10" fill="#000" font-weight="normal" text-anchor="middle" >Partial</text><text x="209.05" y="126.4" font-size="10" fill="#000" font-weight="normal" text-anchor="middle" >Cor.</text><text x="258.0" y="113.8" font-size="10" fill="#000" font-weight="normal" text-anchor="middle" >Semipart</text><text x="258.0" y="126.4" font-size="10" fill="#000" font-weight="normal" text-anchor="middle" >Cor.</text><text x="311.15" y="113.8" font-size="10" fill="#000" font-weight="normal" text-anchor="middle" >Tolerance</text><text x="363.79999999999995" y="113.8" font-size="10" fill="#000" font-weight="normal" text-anchor="middle" >R-square</text><text x="412.25" y="113.8" font-size="10" fill="#000" font-weight="normal" text-anchor="middle" >t(20)</text><text x="458.9" y="113.8" font-size="10" fill="#000" font-weight="normal" text-anchor="middle" >p-level</text><line x1="185.7" y1="103.5" x2="185.7" y2="128" stroke="#8a8a8a" stroke-width="1" /><line x1="186.7" y1="103.5" x2="186.7" y2="128" stroke="#ffffff" stroke-width="0.8" /><line x1="232.4" y1="103.5" x2="232.4" y2="128" stroke="#8a8a8a" stroke-width="1" /><line x1="233.4" y1="103.5" x2="233.4" y2="128" stroke="#ffffff" stroke-width="0.8" /><line x1="283.6" y1="103.5" x2="283.6" y2="128" stroke="#8a8a8a" stroke-width="1" /><line x1="284.6" y1="103.5" x2="284.6" y2="128" stroke="#ffffff" stroke-width="0.8" /><line x1="338.7" y1="103.5" x2="338.7" y2="128" stroke="#8a8a8a" stroke-width="1" /><line x1="339.7" y1="103.5" x2="339.7" y2="128" stroke="#ffffff" stroke-width="0.8" /><line x1="388.9" y1="103.5" x2="388.9" y2="128" stroke="#8a8a8a" stroke-width="1" /><line x1="389.9" y1="103.5" x2="389.9" y2="128" stroke="#ffffff" stroke-width="0.8" /><line x1="435.6" y1="103.5" x2="435.6" y2="128" stroke="#8a8a8a" stroke-width="1" /><line x1="436.6" y1="103.5" x2="436.6" y2="128" stroke="#ffffff" stroke-width="0.8" /><text x="97.5" y="125" font-size="10" fill="#000" font-weight="normal" text-anchor="start" >Variable</text><line x1="96" y1="128.5" x2="769" y2="128.5" stroke="#000" stroke-width="1" /><rect x="96" y="129" width="42.5" height="38.5" fill="#f0ede2" /><rect x="139.5" y="129" width="342.7" height="38.5" fill="#ffffff" /><text x="142.79999999999998" y="138.7" font-size="10" fill="#ff0000" font-weight="normal" text-anchor="start" textLength="40.6" lengthAdjust="spacingAndGlyphs" >0,300008</text><text x="189.5" y="138.7" font-size="10" fill="#ff0000" font-weight="normal" text-anchor="start" textLength="40.6" lengthAdjust="spacingAndGlyphs" >0,887181</text><text x="240.70000000000002" y="138.7" font-size="10" fill="#ff0000" font-weight="normal" text-anchor="start" textLength="40.6" lengthAdjust="spacingAndGlyphs" >0,178687</text><text x="295.79999999999995" y="138.7" font-size="10" fill="#ff0000" font-weight="normal" text-anchor="start" textLength="40.6" lengthAdjust="spacingAndGlyphs" >0,354750</text><text x="345.99999999999994" y="138.7" font-size="10" fill="#ff0000" font-weight="normal" text-anchor="start" textLength="40.6" lengthAdjust="spacingAndGlyphs" >0,645250</text><text x="397.8" y="138.7" font-size="10" fill="#ff0000" font-weight="normal" text-anchor="start" textLength="35.5" lengthAdjust="spacingAndGlyphs" >8,59865</text><text x="439.29999999999995" y="138.7" font-size="10" fill="#ff0000" font-weight="normal" text-anchor="start" textLength="40.6" lengthAdjust="spacingAndGlyphs" >0,000000</text><text x="142.79999999999998" y="151.7" font-size="10" fill="#ff0000" font-weight="normal" text-anchor="start" textLength="40.6" lengthAdjust="spacingAndGlyphs" >0,648188</text><text x="189.5" y="151.7" font-size="10" fill="#ff0000" font-weight="normal" text-anchor="start" textLength="40.6" lengthAdjust="spacingAndGlyphs" >0,969168</text><text x="240.70000000000002" y="151.7" font-size="10" fill="#ff0000" font-weight="normal" text-anchor="start" textLength="40.6" lengthAdjust="spacingAndGlyphs" >0,365539</text><text x="295.79999999999995" y="151.7" font-size="10" fill="#ff0000" font-weight="normal" text-anchor="start" textLength="40.6" lengthAdjust="spacingAndGlyphs" >0,318027</text><text x="345.99999999999994" y="151.7" font-size="10" fill="#ff0000" font-weight="normal" text-anchor="start" textLength="40.6" lengthAdjust="spacingAndGlyphs" >0,681973</text><text x="392.7" y="151.7" font-size="10" fill="#ff0000" font-weight="normal" text-anchor="start" textLength="40.6" lengthAdjust="spacingAndGlyphs" >17,59018</text><text x="439.29999999999995" y="151.7" font-size="10" fill="#ff0000" font-weight="normal" text-anchor="start" textLength="40.6" lengthAdjust="spacingAndGlyphs" >0,000000</text><text x="142.79999999999998" y="164.7" font-size="10" fill="#ff0000" font-weight="normal" text-anchor="start" textLength="40.6" lengthAdjust="spacingAndGlyphs" >0,122997</text><text x="189.5" y="164.7" font-size="10" fill="#ff0000" font-weight="normal" text-anchor="start" textLength="40.6" lengthAdjust="spacingAndGlyphs" >0,680686</text><text x="240.70000000000002" y="164.7" font-size="10" fill="#ff0000" font-weight="normal" text-anchor="start" textLength="40.6" lengthAdjust="spacingAndGlyphs" >0,086352</text><text x="295.79999999999995" y="164.7" font-size="10" fill="#ff0000" font-weight="normal" text-anchor="start" textLength="40.6" lengthAdjust="spacingAndGlyphs" >0,492896</text><text x="345.99999999999994" y="164.7" font-size="10" fill="#ff0000" font-weight="normal" text-anchor="start" textLength="40.6" lengthAdjust="spacingAndGlyphs" >0,507104</text><text x="397.8" y="164.7" font-size="10" fill="#ff0000" font-weight="normal" text-anchor="start" textLength="35.5" lengthAdjust="spacingAndGlyphs" >4,15537</text><text x="439.29999999999995" y="164.7" font-size="10" fill="#ff0000" font-weight="normal" text-anchor="start" textLength="40.6" lengthAdjust="spacingAndGlyphs" >0,000489</text><line x1="139" y1="141.5" x2="482.2" y2="141.5" stroke="#d0d0d0" stroke-width="1" /><line x1="96" y1="141.5" x2="138.5" y2="141.5" stroke="#8a8a8a" stroke-width="1" /><line x1="96" y1="142.5" x2="138.5" y2="142.5" stroke="#ffffff" stroke-width="0.8" /><line x1="482.2" y1="141.5" x2="769" y2="141.5" stroke="#cccccc" stroke-width="1" /><line x1="139" y1="154.5" x2="482.2" y2="154.5" stroke="#d0d0d0" stroke-width="1" /><line x1="96" y1="154.5" x2="138.5" y2="154.5" stroke="#8a8a8a" stroke-width="1" /><line x1="96" y1="155.5" x2="138.5" y2="155.5" stroke="#ffffff" stroke-width="0.8" /><line x1="482.2" y1="154.5" x2="769" y2="154.5" stroke="#cccccc" stroke-width="1" /><line x1="185.7" y1="129" x2="185.7" y2="167.5" stroke="#d4d4d4" stroke-width="1" /><line x1="232.4" y1="129" x2="232.4" y2="167.5" stroke="#d4d4d4" stroke-width="1" /><line x1="283.6" y1="129" x2="283.6" y2="167.5" stroke="#d4d4d4" stroke-width="1" /><line x1="338.7" y1="129" x2="338.7" y2="167.5" stroke="#d4d4d4" stroke-width="1" /><line x1="388.9" y1="129" x2="388.9" y2="167.5" stroke="#d4d4d4" stroke-width="1" /><line x1="435.6" y1="129" x2="435.6" y2="167.5" stroke="#d4d4d4" stroke-width="1" /><line x1="138.8" y1="90" x2="138.8" y2="500.8" stroke="#2a2a2a" stroke-width="1.4" /><rect x="96" y="129" width="42.3" height="12.3" fill="#f8f1ec" /><path d="M99.6 129.4 L106.3 137.5 M106.3 129.4 L99.6 137.5" stroke="#000" stroke-width="1.75"/><text x="106.6" y="140.8" font-size="9" fill="#000" font-weight="bold" text-anchor="start" >1</text><path d="M99 142 L106.5 151.5 M105.5 142.5 L98.8 151.3" stroke="#000" stroke-width="0.85"/><text x="106.6" y="154.5" font-size="8.4" fill="#000" font-weight="normal" text-anchor="start" >2</text><path d="M99 155.2 L106.5 164.8 M105.5 155.7 L98.8 164.6" stroke="#000" stroke-width="0.85"/><text x="106.6" y="167.4" font-size="8.4" fill="#000" font-weight="normal" text-anchor="start" >4</text><line x1="96" y1="168.1" x2="769" y2="168.1" stroke="#cccccc" stroke-width="1" /><line x1="96" y1="181.35999999999999" x2="769" y2="181.35999999999999" stroke="#cccccc" stroke-width="1" /><line x1="96" y1="194.61999999999998" x2="769" y2="194.61999999999998" stroke="#cccccc" stroke-width="1" /><line x1="96" y1="207.87999999999997" x2="769" y2="207.87999999999997" stroke="#cccccc" stroke-width="1" /><line x1="96" y1="221.13999999999996" x2="769" y2="221.13999999999996" stroke="#cccccc" stroke-width="1" /><line x1="96" y1="234.39999999999995" x2="769" y2="234.39999999999995" stroke="#cccccc" stroke-width="1" /><line x1="96" y1="247.65999999999994" x2="769" y2="247.65999999999994" stroke="#cccccc" stroke-width="1" /><line x1="96" y1="260.91999999999996" x2="769" y2="260.91999999999996" stroke="#cccccc" stroke-width="1" /><line x1="96" y1="274.17999999999995" x2="769" y2="274.17999999999995" stroke="#cccccc" stroke-width="1" /><line x1="96" y1="287.43999999999994" x2="769" y2="287.43999999999994" stroke="#cccccc" stroke-width="1" /><line x1="96" y1="300.69999999999993" x2="769" y2="300.69999999999993" stroke="#cccccc" stroke-width="1" /><line x1="96" y1="313.9599999999999" x2="769" y2="313.9599999999999" stroke="#cccccc" stroke-width="1" /><line x1="96" y1="327.2199999999999" x2="769" y2="327.2199999999999" stroke="#cccccc" stroke-width="1" /><line x1="96" y1="340.4799999999999" x2="769" y2="340.4799999999999" stroke="#cccccc" stroke-width="1" /><line x1="96" y1="353.7399999999999" x2="769" y2="353.7399999999999" stroke="#cccccc" stroke-width="1" /><line x1="96" y1="366.9999999999999" x2="769" y2="366.9999999999999" stroke="#cccccc" stroke-width="1" /><line x1="96" y1="380.2599999999999" x2="769" y2="380.2599999999999" stroke="#cccccc" stroke-width="1" /><line x1="96" y1="393.51999999999987" x2="769" y2="393.51999999999987" stroke="#cccccc" stroke-width="1" /><line x1="96" y1="406.77999999999986" x2="769" y2="406.77999999999986" stroke="#cccccc" stroke-width="1" /><line x1="96" y1="420.03999999999985" x2="769" y2="420.03999999999985" stroke="#cccccc" stroke-width="1" /><line x1="96" y1="433.29999999999984" x2="769" y2="433.29999999999984" stroke="#cccccc" stroke-width="1" /><line x1="96" y1="446.55999999999983" x2="769" y2="446.55999999999983" stroke="#cccccc" stroke-width="1" /><line x1="96" y1="459.8199999999998" x2="769" y2="459.8199999999998" stroke="#cccccc" stroke-width="1" /><line x1="96" y1="473.0799999999998" x2="769" y2="473.0799999999998" stroke="#cccccc" stroke-width="1" /><line x1="96" y1="486.3399999999998" x2="769" y2="486.3399999999998" stroke="#cccccc" stroke-width="1" /><line x1="96" y1="499.5999999999998" x2="769" y2="499.5999999999998" stroke="#cccccc" stroke-width="1" /><line x1="529.3" y1="103.5" x2="529.3" y2="500.8" stroke="#cccccc" stroke-width="1" /><line x1="576.0" y1="103.5" x2="576.0" y2="500.8" stroke="#cccccc" stroke-width="1" /><line x1="623.1" y1="103.5" x2="623.1" y2="500.8" stroke="#cccccc" stroke-width="1" /><line x1="670.1" y1="103.5" x2="670.1" y2="500.8" stroke="#cccccc" stroke-width="1" /><line x1="716.8" y1="103.5" x2="716.8" y2="500.8" stroke="#cccccc" stroke-width="1" /><line x1="764.0" y1="103.5" x2="764.0" y2="500.8" stroke="#cccccc" stroke-width="1" /><line x1="185.7" y1="168" x2="185.7" y2="500.8" stroke="#cccccc" stroke-width="1" /><line x1="232.4" y1="168" x2="232.4" y2="500.8" stroke="#cccccc" stroke-width="1" /><line x1="283.6" y1="168" x2="283.6" y2="500.8" stroke="#cccccc" stroke-width="1" /><line x1="338.7" y1="168" x2="338.7" y2="500.8" stroke="#cccccc" stroke-width="1" /><line x1="388.9" y1="168" x2="388.9" y2="500.8" stroke="#cccccc" stroke-width="1" /><line x1="435.6" y1="168" x2="435.6" y2="500.8" stroke="#cccccc" stroke-width="1" /><line x1="482.2" y1="168" x2="482.2" y2="500.8" stroke="#cccccc" stroke-width="1" /><line x1="96" y1="128.5" x2="769" y2="128.5" stroke="#000" stroke-width="1.1" /><line x1="139" y1="103" x2="769" y2="103" stroke="#000" stroke-width="1.1" /><line x1="138.8" y1="90" x2="138.8" y2="500.8" stroke="#2a2a2a" stroke-width="1.4" /><rect x="139.2" y="128.8" width="46" height="1.1" fill="#202020" /><rect x="139.2" y="128.8" width="1" height="12.5" fill="#303030" /><rect x="184.7" y="129" width="2" height="12" fill="#000" /><rect x="139.4" y="140.5" width="43.5" height="2.2" fill="#101010" /><rect x="184.4" y="140" width="3.6" height="3.6" fill="#000" /><rect x="769" y="90" width="15.3" height="425" fill="#f5f2ed" /><rect x="769" y="90" width="12.5" height="4" fill="#ffffff" /><rect x="781" y="89" width="1" height="6" fill="#101010" /><rect x="769" y="94" width="13" height="1" fill="#101010" /><rect x="769" y="95" width="12.5" height="12.5" fill="#f0ede4" /><rect x="769" y="95" width="12.5" height="1" fill="#fbfaf6" /><rect x="769" y="95" width="1" height="12.5" fill="#fbfaf6" /><rect x="769" y="106.5" width="12.5" height="1" fill="#8a8778" /><rect x="780.5" y="95" width="1" height="12.5" fill="#8a8778" /><path d="M772 104.3 H778.5 L775.25 101 Z" fill="#a8a594"/><rect x="769" y="488.5" width="12.5" height="12.7" fill="#f0ede4" /><rect x="769" y="488.5" width="12.5" height="1" fill="#fbfaf6" /><rect x="769" y="488.5" width="1" height="12.7" fill="#fbfaf6" /><rect x="769" y="500.2" width="12.5" height="1" fill="#8a8778" /><rect x="780.5" y="488.5" width="1" height="12.7" fill="#8a8778" /><path d="M772 492.5 H778.5 L775.25 495.8 Z" fill="#a8a594"/><rect x="96" y="500.8" width="673" height="14.2" fill="#f5f2ed" /><rect x="96" y="500.8" width="5" height="13.5" fill="#ffffff" /><rect x="100.8" y="501.5" width="1" height="13" fill="#202020" /><rect x="96" y="514" width="5.8" height="1" fill="#202020" /><rect x="101.8" y="501.5" width="12.8" height="13" fill="#f0ede4" /><rect x="101.8" y="501.5" width="12.8" height="1" fill="#fbfaf6" /><rect x="101.8" y="501.5" width="1" height="13" fill="#fbfaf6" /><rect x="101.8" y="513.5" width="12.8" height="1" fill="#8a8778" /><rect x="113.6" y="501.5" width="1" height="13" fill="#8a8778" /><path d="M110.3 505 V511.5 L107 508.25 Z" fill="#a8a594"/><rect x="756" y="501.5" width="12.8" height="13" fill="#f0ede4" /><rect x="756" y="501.5" width="12.8" height="1" fill="#fbfaf6" /><rect x="756" y="501.5" width="1" height="13" fill="#fbfaf6" /><rect x="756" y="513.5" width="12.8" height="1" fill="#8a8778" /><rect x="767.8" y="501.5" width="1" height="13" fill="#8a8778" /><path d="M760.5 505 V511.5 L763.8 508.25 Z" fill="#a8a594"/><rect x="769" y="501.2" width="13" height="13.8" fill="#efece2" /><rect x="92" y="519.8" width="696" height="16.5" fill="#efece2" /><rect x="93" y="533.5" width="211" height="1.6" fill="#a4a090" /><rect x="96" y="521" width="12.5" height="11.7" fill="#101010" /><rect x="97.2" y="522.2" width="10.1" height="9.3" fill="#fff" /><rect x="98.0" y="523.0" width="1.2" height="1.2" fill="#2040e0" /><rect x="100.2" y="523.0" width="1.2" height="1.2" fill="#2040e0" /><rect x="102.4" y="523.0" width="1.2" height="1.2" fill="#2040e0" /><rect x="104.6" y="523.0" width="1.2" height="1.2" fill="#2040e0" /><rect x="98.0" y="525.2" width="1.2" height="1.2" fill="#2040e0" /><rect x="100.2" y="525.2" width="1.2" height="1.2" fill="#a0a0a0" /><rect x="102.4" y="525.2" width="1.2" height="1.2" fill="#a0a0a0" /><rect x="104.6" y="525.2" width="1.2" height="1.2" fill="#a0a0a0" /><rect x="98.0" y="527.4" width="1.2" height="1.2" fill="#2040e0" /><rect x="100.2" y="527.4" width="1.2" height="1.2" fill="#a0a0a0" /><rect x="102.4" y="527.4" width="1.2" height="1.2" fill="#a0a0a0" /><rect x="104.6" y="527.4" width="1.2" height="1.2" fill="#a0a0a0" /><rect x="98.0" y="529.6" width="1.2" height="1.2" fill="#2040e0" /><rect x="100.2" y="529.6" width="1.2" height="1.2" fill="#a0a0a0" /><rect x="102.4" y="529.6" width="1.2" height="1.2" fill="#a0a0a0" /><rect x="104.6" y="529.6" width="1.2" height="1.2" fill="#a0a0a0" /><text x="112.9" y="530.2" font-size="9" fill="#000" font-weight="normal" text-anchor="start" textLength="187" lengthAdjust="spacingAndGlyphs" >Variables not in the Equation; DV: Y (Spreadsheet1)</text><rect x="305" y="517.6" width="234.5" height="17.4" fill="#f2efe7" /><rect x="305" y="534.7" width="235" height="1.5" fill="#8a8678" /><rect x="538.9" y="518.6" width="1.2" height="17.5" fill="#8a8678" /><rect x="310.2" y="522.8" width="12.5" height="11.7" fill="#101010" /><rect x="311.4" y="524.0" width="10.1" height="9.3" fill="#fff" /><rect x="312.2" y="524.8" width="1.2" height="1.2" fill="#2040e0" /><rect x="314.4" y="524.8" width="1.2" height="1.2" fill="#2040e0" /><rect x="316.59999999999997" y="524.8" width="1.2" height="1.2" fill="#2040e0" /><rect x="318.8" y="524.8" width="1.2" height="1.2" fill="#2040e0" /><rect x="312.2" y="527.0" width="1.2" height="1.2" fill="#2040e0" /><rect x="314.4" y="527.0" width="1.2" height="1.2" fill="#a0a0a0" /><rect x="316.59999999999997" y="527.0" width="1.2" height="1.2" fill="#a0a0a0" /><rect x="318.8" y="527.0" width="1.2" height="1.2" fill="#a0a0a0" /><rect x="312.2" y="529.1999999999999" width="1.2" height="1.2" fill="#2040e0" /><rect x="314.4" y="529.1999999999999" width="1.2" height="1.2" fill="#a0a0a0" /><rect x="316.59999999999997" y="529.1999999999999" width="1.2" height="1.2" fill="#a0a0a0" /><rect x="318.8" y="529.1999999999999" width="1.2" height="1.2" fill="#a0a0a0" /><rect x="312.2" y="531.4" width="1.2" height="1.2" fill="#2040e0" /><rect x="314.4" y="531.4" width="1.2" height="1.2" fill="#a0a0a0" /><rect x="316.59999999999997" y="531.4" width="1.2" height="1.2" fill="#a0a0a0" /><rect x="318.8" y="531.4" width="1.2" height="1.2" fill="#a0a0a0" /><text x="326.7" y="531.8" font-size="9" fill="#000" font-weight="normal" text-anchor="start" textLength="206.3" lengthAdjust="spacingAndGlyphs" >Variables currently in the Equation; DV: Y (Spreadsheet1)</text><rect x="762.2" y="521" width="12.3" height="12.5" fill="#efece2" /><rect x="762.2" y="521" width="12.3" height="1" fill="#ffffff" /><rect x="762.2" y="521" width="1" height="12.5" fill="#ffffff" /><rect x="762.2" y="532.5" width="12.3" height="1" fill="#716f64" /><rect x="773.5" y="521" width="1" height="12.5" fill="#716f64" /><rect x="774.5" y="521" width="12" height="12.5" fill="#efece2" /><rect x="774.5" y="521" width="12" height="1" fill="#ffffff" /><rect x="774.5" y="521" width="1" height="12.5" fill="#ffffff" /><rect x="774.5" y="532.5" width="12" height="1" fill="#716f64" /><rect x="785.5" y="521" width="1" height="12.5" fill="#716f64" /><path d="M770 524 V530.5 L766 527.25 Z" fill="#000"/><path d="M778.5 524 V530.5 L782.5 527.25 Z" fill="#000"/><line x1="0" y1="536.5" x2="788" y2="536.5" stroke="#fbfaf6" stroke-width="1" /><rect x="4" y="540" width="12.5" height="12.5" fill="#fff" stroke="#000" stroke-width="1.2"/><path d="M5.5 551 L7.5 546 L8.5 542.5 L9.5 546 L10.5 549.5 L11.5 545 L14.5 550.5" fill="none" stroke="#000" stroke-width="0.9"/><path d="M5 551.5 H16" stroke="#000" stroke-width="0.6"/><line x1="18.5" y1="538" x2="18.5" y2="560" stroke="#aca899" stroke-width="1" /><line x1="19.5" y1="538" x2="19.5" y2="560" stroke="#fff" stroke-width="1" /><rect x="20.3" y="537.7" width="125" height="21.8" fill="#efece2" /><rect x="20.3" y="537.7" width="125" height="1" fill="#ffffff" /><rect x="20.3" y="537.7" width="1" height="21.8" fill="#ffffff" /><rect x="20.3" y="558.5" width="125" height="1" fill="#716f64" /><rect x="144.3" y="537.7" width="1" height="21.8" fill="#716f64" /><path d="M24.5 542 V555 H37.5" fill="none" stroke="#2030c0" stroke-width="1"/><path d="M26 554 L36.5 543" stroke="#e02020" stroke-width="1.1"/><text x="38.6" y="552.3" font-size="9.6" fill="#000" font-weight="bold" text-anchor="start" textLength="96.4" lengthAdjust="spacingAndGlyphs" >Multiple Regression ...</text><rect x="0" y="559.8" width="788" height="1" fill="#a4a094" /><rect x="0" y="560.8" width="788" height="1" fill="#fdfcf8" /><text x="3" y="572.7" font-size="9.6" fill="#000" font-weight="normal" text-anchor="start" textLength="23" lengthAdjust="spacingAndGlyphs" >Ready</text><rect x="479.5" y="563.5" width="44" height="11" fill="none" stroke="#d4d0c0" stroke-width="1"/><line x1="479.5" y1="563.5" x2="523.5" y2="563.5" stroke="#b8b4a4" stroke-width="1" /><line x1="479.5" y1="563.5" x2="479.5" y2="574.5" stroke="#b8b4a4" stroke-width="1" /><text x="491.3" y="572.5" font-size="9.3" fill="#000" font-weight="normal" text-anchor="start" textLength="21.7" lengthAdjust="spacingAndGlyphs" >C1,V1</text><rect x="526.3" y="563.5" width="85.20000000000005" height="11" fill="none" stroke="#d4d0c0" stroke-width="1"/><line x1="526.3" y1="563.5" x2="611.5" y2="563.5" stroke="#b8b4a4" stroke-width="1" /><line x1="526.3" y1="563.5" x2="526.3" y2="574.5" stroke="#b8b4a4" stroke-width="1" /><text x="533" y="572.5" font-size="9.3" fill="#000" font-weight="normal" text-anchor="start" textLength="76" lengthAdjust="spacingAndGlyphs" >0,300007532796103</text><rect x="612.5" y="563.5" width="36" height="11" fill="none" stroke="#d4d0c0" stroke-width="1"/><line x1="612.5" y1="563.5" x2="648.5" y2="563.5" stroke="#b8b4a4" stroke-width="1" /><line x1="612.5" y1="563.5" x2="612.5" y2="574.5" stroke="#b8b4a4" stroke-width="1" /><rect x="651.8" y="563.5" width="49.10000000000002" height="11" fill="none" stroke="#d4d0c0" stroke-width="1"/><line x1="651.8" y1="563.5" x2="700.9" y2="563.5" stroke="#b8b4a4" stroke-width="1" /><line x1="651.8" y1="563.5" x2="651.8" y2="574.5" stroke="#b8b4a4" stroke-width="1" /><rect x="705.5" y="563.5" width="26.5" height="11" fill="none" stroke="#d4d0c0" stroke-width="1"/><line x1="705.5" y1="563.5" x2="732.0" y2="563.5" stroke="#b8b4a4" stroke-width="1" /><line x1="705.5" y1="563.5" x2="705.5" y2="574.5" stroke="#b8b4a4" stroke-width="1" /><text x="709.5" y="572.5" font-size="9.3" fill="#aca899" font-weight="normal" text-anchor="start" textLength="19.5" lengthAdjust="spacingAndGlyphs" >CAPS</text><rect x="735.3" y="563.5" width="25.200000000000045" height="11" fill="none" stroke="#d4d0c0" stroke-width="1"/><line x1="735.3" y1="563.5" x2="760.5" y2="563.5" stroke="#b8b4a4" stroke-width="1" /><line x1="735.3" y1="563.5" x2="735.3" y2="574.5" stroke="#b8b4a4" stroke-width="1" /><text x="738" y="572.5" font-size="9.3" fill="#000" font-weight="normal" text-anchor="start" textLength="19" lengthAdjust="spacingAndGlyphs" >NUM</text><rect x="764.0" y="563.5" width="22.899999999999977" height="11" fill="none" stroke="#d4d0c0" stroke-width="1"/><line x1="764.0" y1="563.5" x2="786.9" y2="563.5" stroke="#b8b4a4" stroke-width="1" /><line x1="764.0" y1="563.5" x2="764.0" y2="574.5" stroke="#b8b4a4" stroke-width="1" /><text x="768" y="572.5" font-size="9.3" fill="#aca899" font-weight="normal" text-anchor="start" textLength="16.5" lengthAdjust="spacingAndGlyphs" >REC</text><rect x="0" y="576" width="788" height="3" fill="#606060" /><rect x="170" y="576.3" width="496" height="2.7" fill="#202020" /><rect x="666" y="576.3" width="122" height="2.7" fill="#6c6c6c" /><ellipse cx="20" cy="580" rx="8" ry="4" fill="#2c8ad0"/></svg></body></html>
